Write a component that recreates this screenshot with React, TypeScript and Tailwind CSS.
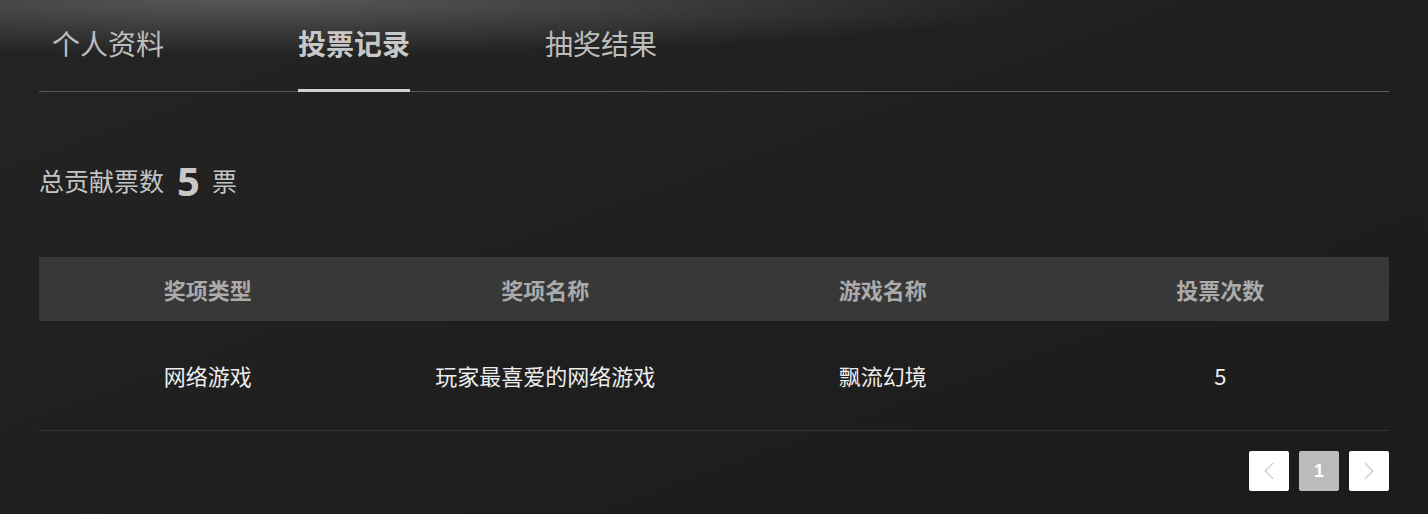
import { ChevronLeft, ChevronRight } from 'lucide-react'

const FONT = { fontFamily: '"Microsoft YaHei", "Noto Sans CJK SC", "Noto Sans", sans-serif' }

const tabs = ['个人资料', '投票记录', '抽奖结果']
const columns = ['奖项类型', '奖项名称', '游戏名称', '投票次数']
const rows = [['网络游戏', '玩家最喜爱的网络游戏', '飘流幻境', '5']]

export default function App() {
  const active = 1
  return (
    <div
      className="relative h-[514px] w-full overflow-hidden bg-gradient-to-br from-[#242424] via-[#1f1f1f] to-[#1b1b1b]"
      style={FONT}
    >
      {/* 顶部高光 */}
      <div className="pointer-events-none absolute inset-0 bg-[radial-gradient(ellipse_800px_55px_at_260px_0px,rgba(110,110,110,0.7),transparent)]" />

      <div className="relative mx-[39px] flex flex-col">
        {/* 标签栏 */}
        <div className="flex h-[92px] items-end gap-[135px] border-b border-[#5a5a5a] pl-[13px]">
          {tabs.map((tab, i) => (
            <div
              key={tab}
              className={
                i === active
                  ? '-mb-px -ml-px flex h-[92px] items-center border-b-[3px] border-[#cfcfcf] pb-[3px] text-[28px] font-bold text-[#c8c8c8]'
                  : '-mb-px flex h-[92px] items-center pb-[6px] text-[28px] text-[#bdbdbd]'
              }
            >
              {tab}
            </div>
          ))}
        </div>

        {/* 总票数 */}
        <div className="mt-[68px] flex h-[42px] items-center text-[#c4c4c4]">
          <span className="text-[25px]">总贡献票数</span>
          <span className="ml-[13px] text-[40px] font-bold leading-none text-[#c8c8c8]" style={{ fontFamily: '"Open Sans", "Noto Sans", sans-serif' }}>5</span>
          <span className="ml-[12px] text-[25px]">票</span>
        </div>

        {/* 表格 */}
        <div className="mt-[55px]">
          <div className="grid h-[64px] grid-cols-4 items-center bg-[#383838] text-[22px] font-bold text-[#ababab]">
            {columns.map(c => (
              <div key={c} className="text-center">{c}</div>
            ))}
          </div>
          {rows.map((r, i) => (
            <div key={i} className="grid h-[110px] grid-cols-4 items-center border-b border-[#333333] text-[22px] text-[#ededed]">
              {r.map((cell, j) => (
                <div key={j} className="text-center">{cell}</div>
              ))}
            </div>
          ))}
        </div>

        {/* 分页 */}
        <div className="mt-[20px] flex justify-end gap-[10px]">
          <button className="flex h-[40px] w-[40px] items-center justify-center rounded-[2px] bg-white text-[#c8c8c8]">
            <ChevronLeft className="h-[30px] w-[30px]" strokeWidth={0.9} />
          </button>
          <button className="flex h-[40px] w-[40px] items-center justify-center rounded-[2px] bg-[#bbbbbb] text-[18px] font-bold text-white" style={{ fontFamily: '"Liberation Sans", Arial, sans-serif' }}>
            1
          </button>
          <button className="flex h-[40px] w-[40px] items-center justify-center rounded-[2px] bg-white text-[#c8c8c8]">
            <ChevronRight className="h-[30px] w-[30px]" strokeWidth={0.9} />
          </button>
        </div>
      </div>
    </div>
  )
}
